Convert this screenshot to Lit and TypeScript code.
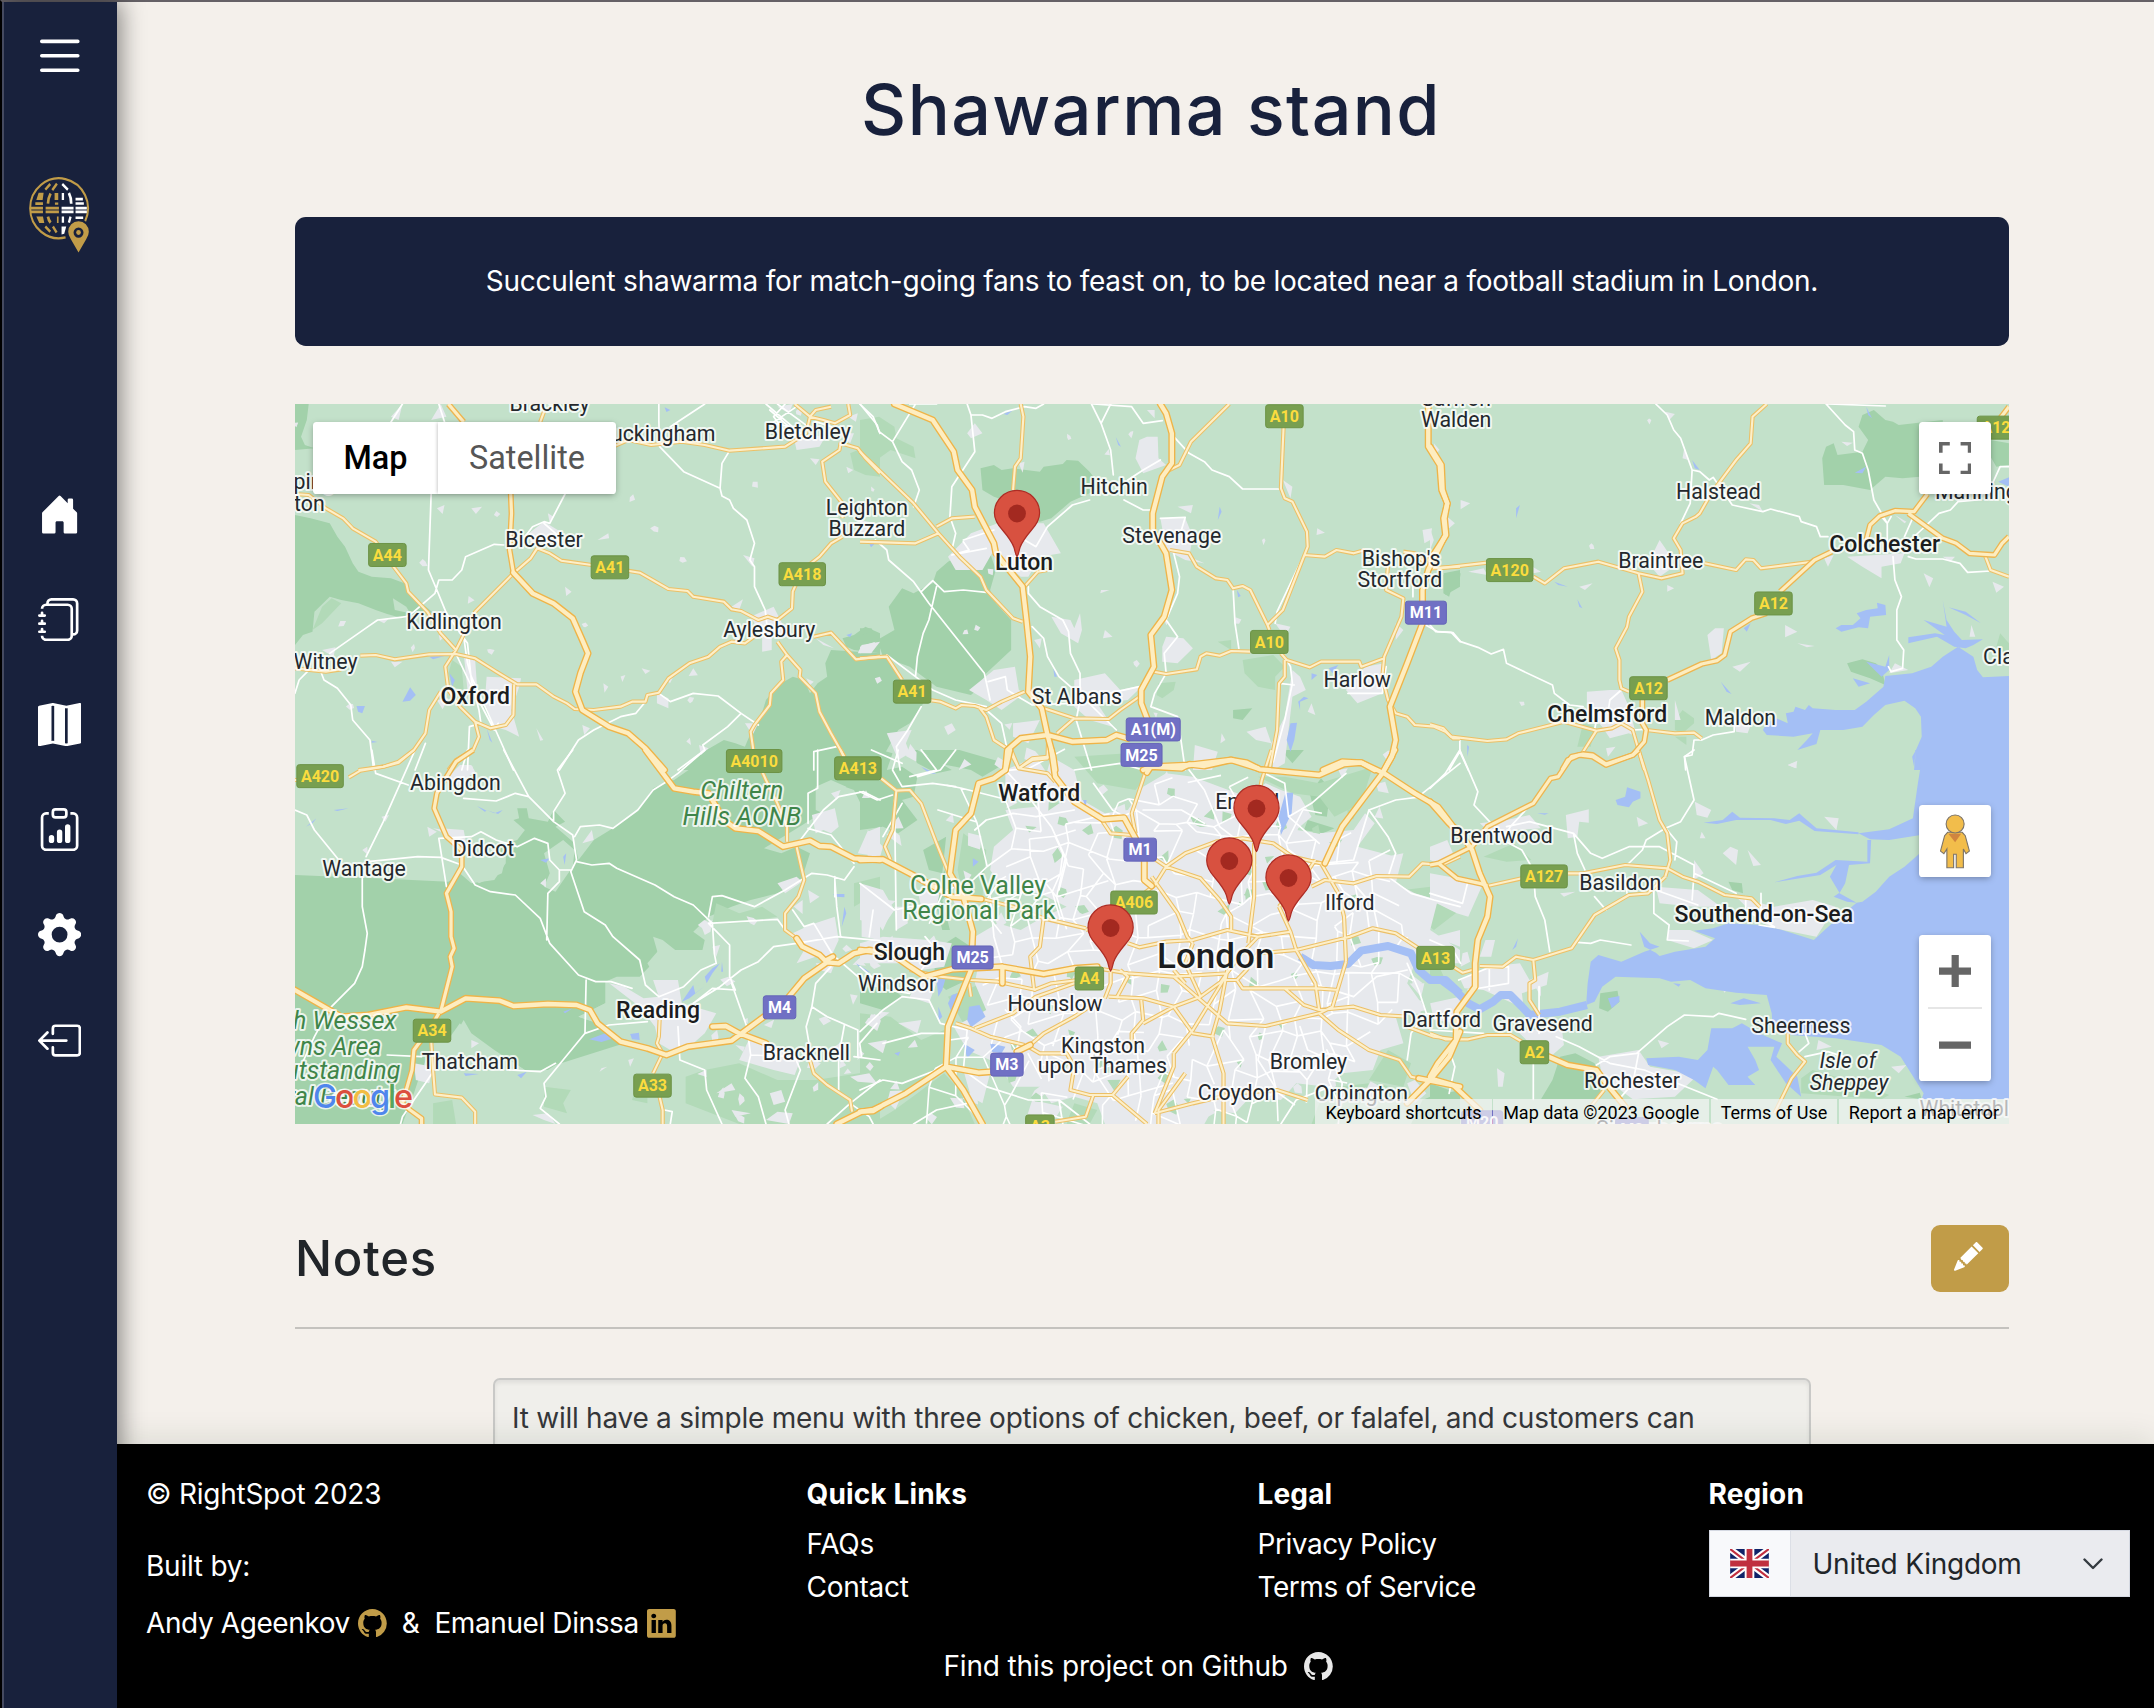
import { LitElement, html, css, svg } from "lit";
import { customElement } from "lit/decorators.js";

/* ---------- icon outlines (16 x 16 grid) ---------- */
const ICONS: Record<string, string[]> = {
  list: ["M2.5 12a.5.5 0 0 1 .5-.5h10a.5.5 0 0 1 0 1H3a.5.5 0 0 1-.5-.5zm0-4a.5.5 0 0 1 .5-.5h10a.5.5 0 0 1 0 1H3a.5.5 0 0 1-.5-.5zm0-4a.5.5 0 0 1 .5-.5h10a.5.5 0 0 1 0 1H3a.5.5 0 0 1-.5-.5z"],
  home: ["M6.5 14.5v-3.505c0-.245.25-.495.5-.495h2c.25 0 .5.25.5.5v3.5a.5.5 0 0 0 .5.5h4a.5.5 0 0 0 .5-.5v-7a.5.5 0 0 0-.146-.354L13 5.793V2.5a.5.5 0 0 0-.5-.5h-1a.5.5 0 0 0-.5.5v1.293L8.354 1.146a.5.5 0 0 0-.708 0l-6 6A.5.5 0 0 0 1.5 7.5v7a.5.5 0 0 0 .5.5h4a.5.5 0 0 0 .5-.5z"],
  journals: [
    "M5 0h8a2 2 0 0 1 2 2v10a2 2 0 0 1-2 2 2 2 0 0 1-2 2H3a2 2 0 0 1-2-2h1a1 1 0 0 0 1 1h8a1 1 0 0 0 1-1V4a1 1 0 0 0-1-1H3a1 1 0 0 0-1 1H1a2 2 0 0 1 2-2h8a2 2 0 0 1 2 2v9a1 1 0 0 0 1-1V2a1 1 0 0 0-1-1H5a1 1 0 0 0-1 1H3a2 2 0 0 1 2-2z",
    "M1 6v-.5a.5.5 0 0 1 1 0V6h.5a.5.5 0 0 1 0 1h-2a.5.5 0 0 1 0-1H1zm0 3v-.5a.5.5 0 0 1 1 0V9h.5a.5.5 0 0 1 0 1h-2a.5.5 0 0 1 0-1H1zm0 2.5v.5H.5a.5.5 0 0 0 0 1h2a.5.5 0 0 0 0-1H2v-.5a.5.5 0 0 0-1 0z",
  ],
  map: ["M16 .5a.5.5 0 0 0-.598-.49L10.5.99 5.598.01a.5.5 0 0 0-.196 0l-5 1A.5.5 0 0 0 0 1.5v14a.5.5 0 0 0 .598.49l4.902-.98 4.902.98a.502.502 0 0 0 .196 0l5-1A.5.5 0 0 0 16 14.5V.5zM5 14.09V1.11l.5-.1.5.1v12.98l-.402-.08a.498.498 0 0 0-.196 0L5 14.09zm5 .8V1.91l.402.08a.5.5 0 0 0 .196 0L11 1.91v12.98l-.5.1-.5-.1z"],
  report: [
    "M4 11a1 1 0 1 1 2 0v1a1 1 0 1 1-2 0v-1zm6-4a1 1 0 1 1 2 0v5a1 1 0 1 1-2 0V7zM7 9a1 1 0 0 1 2 0v3a1 1 0 1 1-2 0V9z",
    "M4 1.5H3a2 2 0 0 0-2 2V14a2 2 0 0 0 2 2h10a2 2 0 0 0 2-2V3.5a2 2 0 0 0-2-2h-1v1h1a1 1 0 0 1 1 1V14a1 1 0 0 1-1 1H3a1 1 0 0 1-1-1V3.5a1 1 0 0 1 1-1h1v-1z",
    "M9.5 1a.5.5 0 0 1 .5.5v1a.5.5 0 0 1-.5.5h-3a.5.5 0 0 1-.5-.5v-1a.5.5 0 0 1 .5-.5h3zm-3-1A1.5 1.5 0 0 0 5 1.5v1A1.5 1.5 0 0 0 6.5 4h3A1.5 1.5 0 0 0 11 2.5v-1A1.5 1.5 0 0 0 9.5 0h-3z",
  ],
  gear: ["M9.405 1.05c-.413-1.4-2.397-1.4-2.81 0l-.1.34a1.464 1.464 0 0 1-2.105.872l-.31-.17c-1.283-.698-2.686.705-1.987 1.987l.169.311c.446.82.023 1.841-.872 2.105l-.34.1c-1.4.413-1.4 2.397 0 2.81l.34.1a1.464 1.464 0 0 1 .872 2.105l-.17.31c-.698 1.283.705 2.686 1.987 1.987l.311-.169a1.464 1.464 0 0 1 2.105.872l.1.34c.413 1.4 2.397 1.4 2.81 0l.1-.34a1.464 1.464 0 0 1 2.105-.872l.31.17c1.283.698 2.686-.705 1.987-1.987l-.169-.311a1.464 1.464 0 0 1 .872-2.105l.34-.1c1.4-.413 1.4-2.397 0-2.81l-.34-.1a1.464 1.464 0 0 1-.872-2.105l.17-.31c.698-1.283-.705-2.686-1.987-1.987l-.311.169a1.464 1.464 0 0 1-2.105-.872l-.1-.34zM8 10.93a2.929 2.929 0 1 1 0-5.86 2.929 2.929 0 0 1 0 5.858z"],
  logout: [
    "M6 12.5a.5.5 0 0 0 .5.5h8a.5.5 0 0 0 .5-.5v-9a.5.5 0 0 0-.5-.5h-8a.5.5 0 0 0-.5.5v2a.5.5 0 0 1-1 0v-2A1.5 1.5 0 0 1 6.5 2h8A1.5 1.5 0 0 1 16 3.5v9a1.5 1.5 0 0 1-1.5 1.5h-8A1.5 1.5 0 0 1 5 12.5v-2a.5.5 0 0 1 1 0v2z",
    "M.146 8.354a.5.5 0 0 1 0-.708l3-3a.5.5 0 1 1 .708.708L1.707 7.5H10.5a.5.5 0 0 1 0 1H1.707l2.147 2.146a.5.5 0 0 1-.708.708l-3-3z",
  ],
  github: ["M8 0C3.58 0 0 3.58 0 8c0 3.54 2.29 6.53 5.47 7.59.4.07.55-.17.55-.38 0-.19-.01-.82-.01-1.49-2.01.37-2.53-.49-2.69-.94-.09-.23-.48-.94-.82-1.13-.28-.15-.68-.52-.01-.53.63-.01 1.08.58 1.23.82.72 1.21 1.87.87 2.33.66.07-.52.28-.87.51-1.07-1.78-.2-3.64-.89-3.64-3.95 0-.87.31-1.59.82-2.15-.08-.2-.36-1.02.08-2.12 0 0 .67-.21 2.2.82.64-.18 1.32-.27 2-.27.68 0 1.36.09 2 .27 1.53-1.04 2.2-.82 2.2-.82.44 1.1.16 1.92.08 2.12.51.56.82 1.27.82 2.15 0 3.07-1.87 3.75-3.65 3.95.29.25.54.73.54 1.48 0 1.07-.01 1.93-.01 2.2 0 .21.15.46.55.38A8.012 8.012 0 0 0 16 8c0-4.42-3.58-8-8-8z"],
  linkedin: ["M0 1.146C0 .513.526 0 1.175 0h13.65C15.474 0 16 .513 16 1.146v13.708c0 .633-.526 1.146-1.175 1.146H1.175C.526 16 0 15.487 0 14.854V1.146zm4.943 12.248V6.169H2.542v7.225h2.401zm-1.2-8.212c.837 0 1.358-.554 1.358-1.248-.015-.709-.52-1.248-1.342-1.248-.822 0-1.359.54-1.359 1.248 0 .694.521 1.248 1.327 1.248h.016zm4.908 8.212V9.359c0-.216.016-.432.08-.586.173-.431.568-.878 1.232-.878.869 0 1.216.662 1.216 1.634v3.865h2.401V9.25c0-2.22-1.184-3.252-2.764-3.252-1.274 0-1.845.7-2.165 1.193v.025h-.016a5.54 5.54 0 0 1 .016-.025V6.169h-2.4c.03.678 0 7.225 0 7.225h2.4z"],
  pencil: ["M12.854.146a.5.5 0 0 0-.707 0L10.5 1.793 14.207 5.5l1.647-1.646a.5.5 0 0 0 0-.708l-3-3zm.646 6.061L9.793 2.5 3.293 9H3.5a.5.5 0 0 1 .5.5v.5h.5a.5.5 0 0 1 .5.5v.5h.5a.5.5 0 0 1 .5.5v.5h.5a.5.5 0 0 1 .5.5v.207l6.5-6.5zm-7.468 7.468A.5.5 0 0 1 6 13.5V13h-.5a.5.5 0 0 1-.5-.5V12h-.5a.5.5 0 0 1-.5-.5V11h-.5a.5.5 0 0 1-.5-.5V10h-.5a.499.499 0 0 1-.175-.032l-.179.178a.5.5 0 0 0-.11.168l-2 5a.5.5 0 0 0 .65.65l5-2a.5.5 0 0 0 .168-.11l.178-.178z"],
};

const icon = (name: string, cls: string) => html`
  <svg class="icon ${cls}" viewBox="0 0 16 16" fill="currentColor">
    ${ICONS[name].map((d) => svg`<path d=${d} />`)}
  </svg>
`;

/* ---------- map geometry ---------- */
/* Each tile holds its own local grid; it is placed with an offset and scaled to map pixels. */
interface Tile {
  x: number;
  y: number;
  park?: string[];
  mid?: string[];
  light?: string[];
  urban?: string[];
  water?: string[];
  river?: string[];
  lane?: string[];
  road?: string[];
  trunk?: string[];
  motorway?: string[];
}

const TILES: Tile[] = [
  {
    x: 280, y: 390,
    park: [
      "39,42 75,42 70,90 55,140 65,165 90,175 39,180",
      "39,375 80,385 130,400 150,440 170,470 190,520 205,545 240,560 290,565 325,580 350,620 400,668 350,682 320,685 280,672 250,660 205,640 160,630 130,620 90,665 85,725 60,735 39,765",
      "1568,790 1440,780 1425,820 1430,860 1405,880 1385,910 1370,870 1340,860 1310,880 1285,910 1270,930 1262,960 1250,990 1230,1030 1215,1070 1190,1060 1160,1050 1100,1090 1040,1140 1568,1140",
      "1470,745 1500,735 1530,710 1568,730 1568,790 1500,780 1480,770",
    ],
    mid: ["1490,190 1530,170 1568,180 1568,260 1530,255 1500,240", "450,810 475,830 480,900 450,890 440,850", "85,720 110,650 135,625 160,640 110,700"],
    light: ["295,625 330,650 340,670 300,660"],
    urban: [
      "650,430 690,395 740,430 720,460 655,460", "540,860 630,865 625,890 605,960 625,1040 590,1020 560,1010 535,940", "480,790 510,810 515,890 490,900",
      "1230,680 1290,650 1330,740 1285,740 1285,780 1260,785 1260,740", "1340,130 1425,140 1410,170 1350,180", "290,80 320,42 310,90", "395,90 420,42 435,80",
      "110,780 145,772 140,800", "985,910 1015,925 1015,955 985,940", "410,355 430,345 425,372", "500,355 528,350 512,372", "830,450 858,430 860,445", "745,590 762,605 748,618",
      "945,835 968,842 955,852", "1080,835 1092,856 1068,858", "845,880 858,890 848,908", "790,1005 810,1015 795,1035", "1180,650 1210,628 1200,660", "1210,495 1240,505 1235,530",
      "700,370 715,380 705,400", "1385,205 1410,208 1400,225", "1520,765 1568,755 1545,790 1510,790", "1485,80 1510,70 1505,95", "1480,230 1498,240 1485,250", "1400,745 1448,775 1420,765",
      "670,1015 688,1050 680,1052", "1375,865 1395,875 1385,885", "1215,1000 1250,1000 1235,1035", "1095,1065 1120,1075 1100,1095", "410,930 440,925 425,958", "415,735 430,740 418,752", "290,815 320,815 300,832",
      "255,690 285,685 272,700", "480,1125 505,1130 500,1140 480,1140", "1460,130 1500,130 1490,160", "1300,50 1340,42 1330,70",
    ],
    water: ["320,935 340,892 355,915 340,932", "200,948 222,948 215,970 204,965", "443,850 457,870 450,890", "1005,52 1020,60 1010,66", "1540,450 1555,460 1545,472", "1480,735 1495,730 1490,742", "540,1015 555,1058 548,1050", "240,1052 255,1056 240,1058", "390,800 430,798 400,808"],
    lane: [
      "320,42 290,96", "415,42 430,96", "395,312 388,540 410,600 435,670 490,760 500,870 520,960 525,1000 495,1010 490,1140", "745,312 705,400 690,395 660,410 640,440",
      "585,465 560,463 485,500 475,540 450,570 415,570 405,610 350,665 330,680 255,690 230,710 130,790", "990,42 990,90 992,170 1055,245 1150,295 1155,318 1175,330 1185,355 1220,390 1240,460 1228,510 1240,530 1240,590 1268,660 1272,700",
      "1020,110 1110,42", "1175,182 1155,220 1150,295", "105,840 115,870 150,895 185,945 190,990 235,1050 245,1140", "39,910 50,870 80,835", "480,740 490,820 500,860 540,960 575,1050 610,1140",
      "730,1140 780,1050 820,1020 890,980 930,970 955,935", "990,910 1020,935 1080,910 1145,918 1205,970 1250,1005", "1205,970 1170,1010 1105,1065 1110,1080 1040,1140", "1395,1140 1395,1085 1455,1070",
      "1280,60 1330,110 1290,100", "1300,42 1380,110", "1285,100 1350,50", "1515,42 1550,80 1568,130", "353,1140 380,1060", "1270,42 1360,130", "1320,42 1290,80 1330,140", "1400,95 1440,110 1450,130", "690,400 720,430 730,460",
      "455,780 505,900 560,1020 570,1000",
    ],
    road: [
      "39,312 75,315 120,355 165,385 190,415 250,455 290,520 330,580 335,605 385,665 420,730 460,780", "672,475 655,505 610,550 510,665 460,780 432,830 440,900 470,950 510,995",
      "510,995 550,1015 590,1005 610,975 612,883", "672,475 705,490 735,512 815,525 940,548 1015,597 1065,603 1080,620 1160,635 1180,658 1205,663 1250,690 1275,680 1300,690",
      "1300,690 1338,655 1340,605 1365,540 1410,500 1440,460 1470,440", "1470,385 1470,340 1425,275 1417,215 1462,180 1465,160 1510,175 1530,205 1568,250",
      "860,175 910,150 970,165 1050,155 1110,165 1175,182 1320,170 1375,130 1385,80", "680,96 690,65", "210,797 250,795 300,808 390,793 460,792 510,805 565,845 620,883 670,883 715,920 750,940 770,957 820,960 890,950 920,935 955,935 960,915 990,908 1015,865 1070,820 1120,800 1150,770 1180,755 1215,760 1245,735",
      "39,835 120,845 160,838", "1300,755 1325,795 1310,815 1315,870 1283,910 1280,945 1240,1005 1230,1025 1237,1080", "1325,795 1360,840 1358,860 1400,910 1410,965 1440,1030 1460,1070 1475,1100",
      "1395,740 1440,728 1505,808 1568,800", "205,1140 270,1130 310,1115 350,1080 380,1030 390,960 420,905", "1345,42 1385,80 1400,60 1440,50", "1385,80 1420,90 1450,100 1490,75 1485,42", "510,995 520,1040 505,1080 460,1110 440,1140",
    ],
    trunk: ["440,42 480,96", "603,312 605,370 600,480 610,548"],
    motorway: ["610,548 660,610 715,640 765,685 790,750 805,790 785,850 772,905 790,960 860,1010 910,1030 955,1075 1005,1140"],
  },
  {
    x: 860, y: 390,
    park: [
      "315,235 350,225 370,240 400,235 470,245 480,230 530,222 540,210 570,212 600,245 630,290 600,310 550,335 500,385 470,395 440,385 400,340 350,320 320,300",
      "190,580 200,545 230,515 270,490 340,490 355,540 340,600 355,640 395,690 395,780 330,850 305,900 290,915 200,890 130,830 60,800 45,750 90,720 75,650 110,595 140,610",
      "0,810 75,800 110,870 185,900 160,950 130,1000 100,1020 60,1100 30,1140 0,1140", "0,715 30,715 35,725 0,735", "1525,550 1568,540 1568,590 1530,615", "975,960 1025,955 1000,990 975,985",
    ],
    mid: ["0,90 50,80 90,110 95,145 140,170 145,205 80,180 50,205 0,195", "1000,810 1080,795 1110,830 1085,860 1085,900 1040,890 1005,850", "935,755 970,750 970,780", "780,880 825,875 820,900 790,925 775,915"],
    urban: [
      "360,400 480,400 525,490 470,500 440,560 420,560 345,490 320,540 250,540 230,500 290,430", "720,205 730,150 750,140 778,140 780,205 800,225 740,250", "785,385 850,385 870,440 860,500 900,520 850,510 800,480",
      "285,900 350,840 405,830 415,900 430,910 370,960 330,930", "560,870 640,850 680,900 740,885 700,930 620,940 660,1010 600,990 560,950", "790,770 800,740 845,745 870,775 830,820 790,815", "560,715 575,670 580,720 570,760 525,730 500,680 550,690",
      "1130,840 1150,860 1165,900 1130,920 1110,1120 1080,1140 1075,1060 1110,980", "1270,900 1320,830 1370,820 1365,910 1300,940", "0,390 40,400 55,440 0,430", "280,130 300,100 320,130 290,145", "750,60 770,60 770,85", "415,220 430,215 425,248",
      "1105,270 1130,290 1125,325", "630,600 652,600 628,610", "640,720 660,740 635,745", "1195,415 1215,428 1193,435", "1470,420 1495,415 1490,450 1475,460", "1180,940 1190,975 1170,965", "945,1030 955,1050 942,1060", "1010,1025 1060,1010 1075,1060 1035,1050", "220,1010 240,1000 250,1020 230,1035",
      "70,1030 135,1020 120,1060 130,1090 100,1110", "0,770 40,755 20,785 0,790", "830,350 870,345 865,370", "1400,700 1420,720 1400,750", "455,750 475,745 470,775", "875,1065 935,1085 920,1140 870,1140", "400,1000 470,990 440,1060 400,1040", "1085,700 1125,710 1110,740", "1500,165 1512,185 1502,185",
    ],
    water: ["1125,1000 1142,998 1135,1050 1125,1085 1115,1050", "1160,920 1172,925 1150,935 1150,960 1145,935", "1225,835 1250,825 1235,850", "1180,850 1195,855 1180,870", "668,140 682,170 675,165", "940,350 945,365 935,390", "985,600 995,618 988,622", "505,835 515,860 508,860", "375,72 400,60 385,75", "20,450 38,460 28,470"],
    lane: [
      "0,42 45,105 50,125 85,155 130,70 145,42", "85,155 110,215 135,240 155,300 140,350", "280,42 290,75 320,75 345,85 380,65 430,50 460,55 480,42", "290,75 300,185 240,290 235,380 250,430 240,480", "605,42 630,100 655,180 662,255", "655,42 630,100",
      "610,42 710,50 740,100 790,92", "820,140 860,190 900,215 920,240 965,260 1000,297 1100,297", "460,470 490,410 555,345 600,330", "690,330 740,360 765,360", "785,210 740,240 700,270", "40,450 70,480 75,510 140,575 180,640 325,850 340,930",
      "160,605 190,572 220,605 270,600 330,607", "200,590 180,690 165,730 150,800 145,860 70,795", "145,860 190,900 250,930 330,950", "335,875 380,860 385,900 420,925 450,945 550,940", "440,590 440,610 470,650 530,690 545,725 550,790 575,850 575,930 565,990 605,1140",
      "450,710 480,745 490,800 520,860 590,930 670,1020", "820,490 835,560 830,610 800,690", "800,690 830,740 795,790 800,850 770,910 760,950 830,980 850,1140", "975,595 980,700 990,775", "1160,495 1090,665 1085,700", "1095,770 1125,830 1130,880 1110,990 1080,1115",
      "1445,570 1445,620", "1470,700 1510,725 1545,727 1568,755", "1275,910 1365,910 1375,830", "330,960 370,1000 385,1080", "160,950 125,1020 95,1070 105,1140", "785,385 850,382 840,420", "270,450 350,420", "270,455 285,480 240,495 330,475", "430,450 460,470", "1135,885 1095,880",
      "550,940 650,910 730,890", "130,42 200,42",
    ],
    road: [
      "420,42 427,80 420,205 405,230 400,300", "0,185 140,340 205,430 260,500 315,560 330,600 400,685 425,695", "0,455 145,460 205,430", "200,410 240,385 300,380", "965,42 865,155 835,225 800,245", "1107,110 1100,295 1110,325 1130,335 1168,425 1170,470 1105,660 1065,705",
      "1160,495 1215,500 1245,480 1290,490 1320,480", "1380,520 1375,600 1420,625 1415,680 1370,800 1365,860 1380,930 1400,970 1430,980 1450,1005 1500,1010 1530,1025 1550,1045 1568,1045", "810,480 860,490 880,530 930,565 960,570 975,595 1000,588 1020,600 1065,705 1070,720",
      "768,845 800,852 880,838 890,800 905,790 940,797 970,783 1020,785", "1100,790 1115,810 1175,832 1205,815 1305,815 1310,830 1370,805", "1110,810 1110,860 1095,880 1090,1020 1070,1140", "180,930 210,935 250,955 265,945 300,948 330,960 370,935 430,905", "0,805 70,800 110,870",
      "310,950 330,980 350,1050 390,1080 415,1135", "480,955 560,985 650,987 680,960 730,920", "515,1030 560,985", "430,590 465,545 490,540", "1420,485 1450,490 1490,535 1568,530", "415,1135 450,1110 490,1105 492,1040",
    ],
    motorway: [
      "90,42 190,90 245,185 255,240 293,300 300,350 350,460 355,490 425,590 435,690 445,800 440,905 475,955 490,1035 505,1100 510,1140", "785,42 800,70 815,130 815,220 790,260 765,370 765,420 800,490 815,600 795,680 760,735 768,830 735,900 735,940 750,985",
      "1485,42 1485,170 1515,225 1520,300 1535,340 1525,385 1530,435 1485,540 1470,600 1470,700 1430,820 1385,950 1400,1050 1390,1100 1370,1140", "380,1140 385,1080 420,1045 490,1035 555,1055 645,1050 670,1035 700,1045", "740,1140 760,1130 860,1125 970,1110 1040,1135", "1210,1140 1260,1115 1310,1118 1345,1140",
    ],
  },
  {
    x: 1430, y: 390,
    park: [
      "1130,75 1160,60 1190,90 1210,95 1225,105 1340,90 1345,250 1280,260 1235,265 1190,260 1150,300 1080,285 1030,285 1025,205 1035,170 1055,160 1065,195 1130,185 1145,150 1120,110",
      "1090,820 1130,808 1165,820 1180,835 1190,885 1150,865 1100,845", "35,555 80,550 75,590 55,600 50,620 35,610", "1465,150 1513,160 1513,225 1480,230 1465,200",
    ],
    mid: ["640,990 660,960 690,985 690,1000 660,1030 640,1020", "400,1000 430,1010 420,1070 385,1070", "640,1040 670,1040 670,1065", "1490,730 1513,760 1513,800 1480,770"],
    urban: [
      "600,450 630,500 625,540 600,560 570,520", "1090,500 1240,490 1230,520 1180,530 1180,565 1130,530", "410,905 470,900 500,900 520,950 540,1040 520,1030 470,1045 450,1010 410,960", "745,715 768,715 762,790 735,810 725,735",
      "80,330 105,340 80,358", "30,365 65,400 50,415", "665,170 675,210 660,205", "615,65 640,72 625,90", "835,340 860,345 870,365", "390,590 425,580 405,600", "620,585 638,595 620,605", "790,830 838,815 810,845", "928,705 960,725 928,742", "960,760 1005,768 985,772",
      "1290,550 1315,565 1305,592", "1470,575 1500,590 1480,608", "1215,820 1250,840 1200,850", "1075,155 1105,158 1090,168", "460,1075 485,1070 465,1100", "935,1125 960,1112 955,1135", "1030,505 1055,495 1040,530", "640,930 655,990 640,990", "1415,705 1425,740 1410,740",
      "100,545 140,535 150,555", "1215,375 1245,395 1240,400", "10,160 25,180 15,188", "795,1000 840,1000 830,1030 800,1025", "260,525 290,545 270,550", "1340,500 1372,500 1360,515", "0,415 10,450 0,480",
    ],
    water: [
      "1513,858 1445,862 1430,840 1420,800 1400,785 1380,770 1340,800 1310,830 1260,850 1190,858 1185,890 1140,935 1110,960 1060,960 1000,955 990,945 980,960 955,950 950,965 930,970 935,1000 905,985 880,1000 870,1020 880,1035 950,1040 1000,1030 985,1050 960,1080 1010,1062 1020,1020 1080,1020 1130,1010 1160,975 1190,945 1240,932 1268,955 1283,980 1285,1040 1270,1080 1265,1140 1513,1140",
      "1340,630 1350,690 1370,725 1390,750 1445,748 1420,765 1400,775 1370,770 1325,740 1250,760 1250,742 1320,730 1345,735 1290,690 1350,710", "1060,715 1075,705 1105,705 1125,685 1115,670 1140,660 1170,655 1168,638 1190,645 1192,675 1150,680 1145,715 1120,712 1075,725",
      "1485,275 1513,262 1513,290", "1110,248 1140,230 1130,250", "1355,652 1400,665 1440,700 1400,675", "685,210 705,240 692,235", "225,355 235,345 225,385", "385,628 398,655 390,650", "325,575 360,590 335,585", "820,715 838,700 828,725", "760,875 788,912 775,905", "1140,50 1155,85 1145,75",
      "1105,865 1150,880 1120,890", "1140,815 1190,830 1200,795 1200,840 1180,860", "97,1065 102,1070 98,1100", "1260,1100 1270,1080 1265,1130",
    ],
    lane: [
      "590,42 620,75 637,120 655,145 685,240 680,340 655,400", "685,240 705,245 730,270 740,262 790,345 870,365 890,357 965,380 970,395 1010,410 1020,440 1040,440", "1035,42 1085,105 1107,125 1110,180 1130,190 1145,240 1160,330 1195,400 1195,480", "1040,42 1190,48",
      "0,705 15,725 60,728 80,755 125,772 160,792 192,778 200,820 320,885 325,910 365,945 400,950", "500,900 470,930 465,970", "1210,500 1215,570 1232,620 1220,660 1220,750 1238,780 1235,835 1205,845 1198,830", "1250,500 1270,507 1340,507 1385,520 1405,547 1465,543",
      "1270,435 1330,370 1360,360 1380,335 1430,330 1470,280 1490,230 1513,230", "1265,375 1240,440", "78,1045 78,1085 50,1140", "78,1085 100,1140", "710,1050 740,1035 795,1025 795,1000", "710,1050 690,1050 685,1095 665,1100 668,1140", "1180,380 1195,400 1205,380", "530,1020 560,1018", "435,990 430,1020",
    ],
    road: [
      "20,535 150,518", "270,560 300,580 350,535 440,515 545,550 605,565 660,550 655,480 637,445 660,400 695,380 705,370 735,310 800,210 838,160 843,80 880,42", "545,550 555,605 520,680 515,710 485,775 495,810 495,870 500,895 520,905",
      "718,520 800,540 825,508 845,510 865,535 1000,515", "0,1003 35,1015 55,1040 150,1053 200,1048 230,1030 350,995 435,1022 475,1015 500,1000 530,1020 545,1080 560,1140", "565,1020 640,1030 690,1028 710,1045", "435,1022 395,1095", "1450,495 1465,540 1513,560",
    ],
    trunk: [
      "1513,50 1490,85", "1300,312 1265,365 1215,362 1175,378 1150,405 1140,450", "1050,485 1005,510 915,605", "880,670 840,685 785,725 770,795 750,812 710,822 620,870", "1250,370 1340,445 1375,460 1410,490 1475,495 1495,460 1513,440",
      "555,925 555,1000 565,1020 560,1055 530,1095 460,1125 425,1100 390,1095 360,1110 345,1140",
    ],
    motorway: ["0,170 30,225 33,300 45,340 38,385 42,435 0,510"],
  },
  {
    x: 280, y: 750,
    park: [
      "39,375 150,380 250,385 440,395 470,370 500,400 560,390 590,340 590,320 560,290 620,270 640,240 610,210 625,205 620,175 645,175 650,205 700,215 715,180 745,215 720,230 770,280 780,330 820,270 870,235 935,180 975,115 1010,95 1030,90 1080,50 1110,0 1568,0 1568,215 1530,190 1500,120 1450,100 1420,180 1400,200 1330,250 1265,295 1310,310 1350,290 1385,310 1360,400 1300,430 1230,450 1180,470 1120,500 1080,545 1110,570 1100,620 1060,625 1000,570 975,560 990,620 940,680 880,680 850,695 850,760 780,800 830,820 900,830 900,880 720,945 700,960 640,960 560,900 500,850 480,810 450,870 400,880 370,960 350,1030 320,1122 39,1122",
    ],
    mid: [
      "1500,400 1568,380 1568,500 1530,450 1500,470", "1060,980 1110,960 1200,940 1300,990 1400,990 1568,960 1568,1122 1200,1122 1060,1060", "690,1010 760,1020 740,1060 750,1090 690,1070", "930,1010 960,1000 960,1060 920,1050", "400,1060 450,1050 460,1122 400,1122",
      "1140,460 1200,490 1260,470 1300,500 1200,520 1130,520",
    ],
    light: [
      "690,310 740,270 770,300 765,350 735,400 720,425 690,410 705,370", "400,230 560,290 590,320 580,370 520,400 480,360 420,300", "780,800 850,760 960,770 960,850 900,870 830,820", "420,900 470,820 500,860 640,960 500,1000 430,960", "1400,110 1440,90 1480,110 1440,200 1400,180",
      "1130,600 1160,560 1140,700 1000,720 960,640 990,600",
    ],
    urban: [
      "860,700 900,710 950,745 990,740 975,690 1040,690 1050,760 1140,790 1110,850 1070,890 1020,900 990,880 980,830 940,770", "1390,195 1450,175 1460,230 1440,250 1420,240 1400,250", "1535,245 1568,230 1568,320 1510,310", "1385,525 1450,500 1460,570 1440,620 1400,620 1350,640 1370,600 1330,555",
      "1225,870 1260,870 1360,930 1345,975 1290,960 1260,950 1200,930", "440,80 470,45 500,45 510,65 480,90 470,110", "420,235 480,240 490,300 440,265", "790,280 815,240 820,270", "1520,510 1550,505 1568,520 1568,570 1520,560", "385,230 410,245 390,260", "215,300 228,290 230,315", "500,870 520,880 500,895",
      "1380,420 1410,440 1385,460", "1300,400 1350,380 1365,395 1320,430", "1280,1030 1310,1020 1320,1055 1290,1065", "1140,1030 1180,1000 1190,1020", "350,940 400,950 390,1000 355,990", "840,955 855,950 835,965", "910,930 925,925 915,950", "680,400 695,385 695,412", "1100,525 1130,510 1125,545 1110,555",
      "1490,980 1540,970 1560,1000 1510,995", "660,1095 700,1090 720,1122 690,1110", "1270,1110 1300,1085 1340,1090 1330,1122", "1400,640 1450,640 1440,670 1410,660", "1190,885 1215,890 1210,905", "1180,1080 1230,1090 1190,1100", "420,245 400,235 430,240", "1440,130 1465,120 1455,150", "265,200 285,195 275,215", "1130,590 1150,585 1140,620",
    ],
    water: [
      "1050,755 1080,705 1085,730 1110,708 1070,745", "808,868 850,850 885,860 840,876", "915,852 938,848 940,870 920,868", "680,330 705,325 695,338", "740,320 748,310 744,345", "540,180 560,190 582,180 570,192", "515,168 540,182 535,185", "68,230 95,205 85,220", "140,180 180,175 150,183", "1445,432 1475,432 1475,442 1455,440",
      "1475,470 1480,490 1468,530", "1505,640 1545,668 1520,660", "1155,635 1158,665 1153,665", "1110,680 1130,655 1150,640 1130,670 1115,700", "480,970 520,972 485,978", "620,975 645,965 630,985", "740,785 765,775 745,790",
    ],
    lane: [
      "240,0 250,70 335,105", "353,0 270,215 225,320", "39,180 70,195 90,240 150,325", "230,335 360,320 420,322 475,345 510,405 550,425 615,435 680,505 705,580 780,675 825,695 865,695 920,715", "490,0 475,60", "480,145 565,153 615,130 650,140", "585,0 650,140 715,215 765,255 775,330 760,365 795,485 850,525 870,560 940,630 955,705 990,740",
      "765,0 725,60 745,130 715,185 715,215", "770,260 785,230 835,225 870,235 935,180 975,120 1010,95 1040,70 1110,0", "775,335 815,345 860,340 880,355 980,405 1030,440 1080,465 1130,520 1135,610 1140,640 1100,660 1055,710 990,740", "1120,520 1175,585 1175,680 1190,720", "1120,520 1300,508 1320,540",
      "1130,440 1155,437 1240,470 1320,420 1390,370 1430,375 1475,390 1500,350", "1120,500 1130,440", "415,265 435,410", "415,265 500,260 525,245 565,270 620,290 665,265 700,280 705,330 730,360 760,360", "730,360 730,395 700,430 697,570", "215,370 215,470 228,550 222,600 215,650 195,700 130,775 90,860 50,960", "280,915 370,920",
      "800,690 797,850 690,1000 695,1040 680,1075 730,1122", "797,850 860,825 960,815", "600,960 680,965 720,940", "400,965 380,1000 320,1100 315,1122", "1080,760 1150,710 1205,660 1250,635 1290,590 1350,580 1455,560 1568,572", "1180,700 1220,830 1230,915 1345,920 1360,960 1320,1080 1330,1122", "1040,830 1045,930 1110,960 1115,1020 1155,1122",
      "1230,915 1215,985 1250,1040 1270,1122", "1005,1080 1025,1085 1020,1122", "1340,480 1370,530 1395,520 1445,615 1510,680", "1450,390 1455,470 1465,560", "1440,650 1400,700 1390,770 1430,800 1510,840 1510,920", "1475,825 1460,920 1460,1020", "1390,770 1375,830 1390,930", "1405,0 1405,115 1380,130 1380,220", "1360,270 1420,180 1460,140 1525,125 1568,150",
      "1380,235 1440,255 1500,340", "1430,1122 1490,1060 1568,990", "1500,920 1568,930", "1190,720 1130,715 1080,760", "1560,820 1515,880 1520,920", "1450,380 1450,440", "1550,480 1540,560", "1490,1060 1540,1100 1550,1122",
    ],
    road: [
      "180,82 210,62 270,50 310,38 350,0", "395,870 400,960 405,1033 475,1043 510,1085 510,1122", "992,810 990,860 985,880 1000,910 975,970", "992,1040 1000,1080 1000,1122", "1235,0 1270,90 1300,160 1325,230 1325,275", "1350,290 1370,390 1355,440 1320,490 1320,540 1350,565",
      "1385,930 1395,970 1430,1005 1490,1050 1495,1085", "39,90 50,90", "1465,0 1475,25",
    ],
    trunk: ["505,0 460,35 430,90 410,130 403,175 435,260 475,300 475,350 435,430 447,485 447,560 455,595 445,620 450,650 420,785", "415,790 395,830 350,900 345,960 330,1020 320,1060 340,1080 370,1105 370,1122"],
    motorway: [
      "955,0 1030,115 1080,125 1120,130 1160,210 1190,235 1250,243 1315,290 1385,272 1410,288 1440,290 1500,325 1568,330", "39,720 130,780 160,800 230,795 330,772 420,785 485,745 575,752 610,768 700,762 775,765 810,780 830,820 890,875 960,895 1010,915 1065,890 1180,872 1265,800",
      "1330,740 1370,685 1430,637 1460,640 1500,610 1540,600 1568,605", "1350,565 1365,590 1410,615 1425,632 1445,620", "1130,830 1165,828 1200,850 1270,880", "1455,1122 1520,1085 1550,1080 1568,1070",
    ],
  },
  {
    x: 860, y: 750,
    park: [
      "0,20 55,0 85,10 70,60 110,50 150,80 140,140 110,150 150,210 100,250 60,230 0,240", "160,0 260,0 380,40 320,80 290,60 250,50 200,40", "195,600 250,560 290,590 280,690 225,720 195,690", "220,360 240,420 215,450 235,540 215,540 200,470", "640,795 700,762 735,800 728,850 670,860 640,835",
      "815,370 870,375 888,430 850,455 820,430", "0,700 60,690 110,740 60,780 0,760", "1100,0 1130,40 1160,0", "1175,130 1205,85 1230,120 1220,200 1190,195", "1490,1040 1568,1020 1568,1122 1440,1122 1470,1050", "120,0 150,0 240,60 200,70 150,40", "800,455 840,430 850,455", "880,945 925,970 905,975", "1170,210 1240,235 1210,250 1160,240",
      "165,300 225,260 215,370 180,360", "1140,930 1165,940 1150,950",
    ],
    mid: [
      "0,790 80,800 160,870 220,840 230,950 120,1020 30,1080 0,1080", "30,1122 90,1080 150,1030 220,970 260,1020 300,1122", "230,740 320,700 390,760 350,840 280,840", "270,250 330,300 320,440 270,440 255,360", "560,20 700,10 760,60 720,120 620,100", "1040,80 1110,80 1200,100 1340,50 1310,160 1240,200 1200,140 1130,130",
      "1420,420 1568,400 1568,480 1500,540 1430,480", "1380,900 1440,940 1420,1010 1330,990", "700,880 760,900 750,960 700,950", "560,1060 620,1080 600,1122 540,1122", "1250,1010 1330,1000 1300,1080 1240,1122 1180,1122 1200,1060",
    ],
    light: ["300,180 370,150 430,200 400,260 350,300 290,290", "0,250 60,230 100,330 30,330"],
    urban: [
      "500,20 560,60 580,150 640,190 700,180 740,110 800,70 870,80 940,110 1010,140 1060,100 1100,120 1150,140 1180,200 1140,240 1200,250 1290,240 1320,190 1345,220 1300,290 1330,330 1420,310 1400,400 1450,430 1510,450 1490,540 1568,600 1568,640 1450,640 1430,700 1480,780 1400,800 1420,880 1360,900 1340,960 1260,970 1220,1010 1140,1000 1100,1050 1020,1040 980,1090 920,1080 900,1122 640,1122 620,1060 560,1040 500,1060 470,1010 400,1010 370,960 340,930 280,900 245,830 330,780 300,700 310,640 300,560 360,520 420,540 480,500 540,470 470,430 380,420 340,360 350,290 400,240 380,180 460,170 480,100",
      "0,580 60,560 180,570 240,580 220,650 160,660 100,640 0,640", "430,1122 450,1050 530,1070 500,1122", "20,240 60,290 50,330 20,320", "0,400 60,420 90,480 60,530 0,510", "380,60 460,20 500,90 450,150 380,140", "150,690 200,700 180,760 130,740", "1240,330 1300,290 1400,320 1380,380 1300,390",
      "100,820 160,810 150,850", "20,880 70,870 60,910", "1430,1000 1450,990 1480,1030 1450,1060", "1490,760 1568,740 1568,820 1500,810", "90,470 120,470 125,520 95,540", "150,420 210,420 200,470 160,470", "1500,560 1568,540 1568,590", "270,960 340,970 320,1060 290,1040", "1250,60 1275,55 1260,85",
    ],
    water: [
      "1112,128 1132,128 1128,190 1100,255 1094,200", "240,735 258,728 262,780 240,790 230,760", "285,770 312,765 328,800 290,832 280,810", "340,880 380,890 370,910 345,905", "200,690 225,680 215,720 205,740", "205,770 215,800 205,812", "295,325 310,335 295,350", "583,150 592,150 590,175", "370,950 410,945 390,980 360,975", "270,880 300,900 280,925",
      "160,50 200,72 180,70", "90,910 105,905 100,918",
    ],
    river: ["1150,620 1185,645 1230,648 1275,642 1310,602 1380,588 1440,610 1460,660 1490,690 1530,690 1568,730"],
    lane: [
      "0,125 45,150 85,135", "100,0 85,60 110,110 190,100 250,110", "130,80 200,60 160,0", "300,240 330,210 400,190 460,200 560,180", "380,60 420,110 460,170 500,230 540,330 520,420", "0,400 90,480 130,470 210,460", "90,150 95,540", "340,440 350,560 370,640", "250,0 210,60 150,80", "110,160 60,260",
      "0,845 60,780 110,740 180,750 210,820 280,840", "0,1020 60,990 110,1000 200,960", "60,880 160,850 220,850", "280,840 270,960 330,1010 440,1050 520,1050 600,1122", "1210,340 1290,330 1330,180 1400,150 1470,140", "1330,180 1380,260 1400,310 1380,380 1440,430", "1470,130 1568,40",
      "1440,430 1500,450 1568,470", "1330,530 1320,440 1290,400", "1040,60 1110,100 1120,200 1200,280", "1120,200 1180,160 1270,70", "860,60 900,120 940,230 980,265", "610,100 660,180 690,200", "1430,640 1460,720 1480,790 1568,800", "1480,790 1440,850 1430,930", "740,180 840,180 900,220", "560,60 680,40 740,60",
      "0,650 70,720 130,730", "1100,1122 1140,1050 1230,1010", "1250,1122 1260,1000 1220,900", "1060,828 1040,930 1090,1020", "1150,830 1170,900 1230,930", "520,1050 530,1122", "170,560 200,600 160,660", "1180,700 1290,740 1350,680 1430,660", "140,1122 200,1080 280,1060", "30,0 110,40", "380,780 420,830 410,900",
    ],
    road: [
      "415,55 450,25 495,20", "395,0 415,55 490,70 510,95", "720,250 710,190 745,70", "55,85 95,122 85,240 65,290 80,330", "95,122 130,120 160,160 200,280 232,370", "320,447 400,470 480,505 590,535", "480,505 470,590 445,620 455,720 500,700 570,690", "620,190 655,250 710,255",
      "590,540 660,510 710,460 770,405 800,350 850,310 930,275 1000,265 1080,280 1130,320 1205,340 1250,430 1265,500 1270,635", "762,380 830,490 855,560 870,580", "735,300 800,350 890,385 940,450 970,500 970,540", "700,580 730,592 800,575 870,570 960,540 1040,560 1125,545", "1075,0 1050,90 1030,200 1030,440 1015,580",
      "1095,470 1125,545 1140,600 1190,700 1200,780", "1180,410 1215,390 1290,400 1350,378 1435,380 1470,340 1520,345 1568,320", "1520,345 1568,390", "1040,610 1140,600 1280,560 1340,535 1400,550 1460,595", "1270,635 1235,770 1200,790", "650,740 740,745 820,770 890,740 950,690 985,690", "985,690 1000,715 1110,715 1195,715 1250,720",
      "960,660 940,780 920,860 950,970 950,1122", "1110,715 1160,765 1200,780 1290,770 1360,795 1430,800", "820,770 870,850 925,860", "820,680 880,740 960,820 1060,828 1200,790", "1200,790 1250,840 1330,900 1410,930 1440,980 1480,990", "960,670 820,680 700,670 620,655", "680,660 700,680 670,745", "655,665 655,700 640,745",
      "430,885 340,860 290,835 250,820", "300,835 400,790 460,740 560,700", "440,890 480,850 560,800 600,770", "440,890 470,910 540,910 560,950 550,1020 600,1035 660,1035 700,980", "735,750 740,810 710,850 710,900", "820,770 740,820", "820,910 820,950 770,1090", "610,1035 590,1100 510,1115", "660,1035 750,1122",
      "770,1090 870,1060 980,1030 1090,1020 1170,1050", "820,910 870,840 950,690", "290,690 360,695 460,720", "890,740 850,640 870,580", "940,700 990,620 1040,560", "850,700 820,660", "1045,600 1010,660 985,690", "1430,830 1500,860 1568,870", "130,660 210,680 290,690", "1190,330 1160,380 1095,470", "780,1122 780,1080 850,970",
      "285,700 290,740",
    ],
    motorway: [
      "392,0 380,60 350,85 310,100 290,190 250,240 235,370 270,440 295,545 290,660 230,830 225,950", "500,0 510,80 560,155 635,208 690,203 720,265", "743,330 743,390 762,408", "750,68 760,50 840,55 860,43 900,48 970,30 1010,38 1045,58 1200,75 1265,42 1310,38 1370,70 1450,130 1510,170 1550,230 1568,245",
      "1398,0 1365,70 1260,230 1235,290 1215,340", "0,330 60,328 130,370 240,440 317,447", "0,600 80,610 130,650 170,680 240,658 370,650 480,672 560,655 620,650", "372,650 372,700", "225,950 310,968 345,965", "410,905 445,885", "0,1085 35,1083 60,1065 120,1030 225,950 270,1020 320,1122", "1568,845 1540,920 1490,990 1430,1060",
      "1460,985 1568,1010",
    ],
  },
  {
    x: 1430, y: 750,
    park: ["445,730 490,722 495,755 465,785 442,775", "290,1048 320,990 340,920 380,910 430,940 450,1000 440,1048", "0,1000 50,1020 60,1048 0,1048", "1240,1040 1280,1028 1285,1048", "780,395 815,400 818,430 790,420"],
    mid: ["970,985 1000,960 1120,1000 1200,1035 1180,1048 970,1030", "140,320 220,280 265,330 200,335", "0,620 20,640 40,690 0,680"],
    urban: [
      "850,510 900,470 1000,450 1060,470 1010,560 900,535", "625,540 680,540 740,570 690,595 620,570", "80,690 150,650 235,640 260,690 310,665 305,705 240,730 245,775 140,720 90,715", "0,370 50,380 135,410 100,500 70,490 0,450", "225,840 345,840 350,885 320,915 270,890", "440,920 545,900 575,950 700,975 640,1040 530,1048 450,980",
      "355,195 415,178 415,218 390,215 385,260 360,265", "692,155 735,180 725,203 697,195", "765,310 785,290 805,300 800,345", "830,300 865,345 845,348", "130,220 200,210 260,195 290,235 220,240 180,270", "540,200 570,220 545,230", "710,245 720,265 705,265", "1030,200 1068,205 1062,240", "935,45 958,35 958,55", "145,570 170,570 160,620 130,620",
      "85,610 98,605 105,635 80,650", "595,870 625,880 605,895", "175,955 195,970 190,1010 178,1010", "1205,950 1245,945 1225,970", "760,710 785,705 770,728", "1015,870 1050,890 1010,900", "0,290 45,270 60,310 20,340 0,330", "590,410 700,420 760,470 690,470 600,460", "340,430 380,425 350,440", "800,440 900,470 860,510", "690,330 715,370 690,390", "265,690 290,690 290,740",
    ],
    light: ["1050,500 1110,455 1130,460 1070,500"],
    water: [
      "1268,0 1282,50 1275,100 1262,205 1200,238 1120,250 1150,268 1200,270 1278,256 1278,312 1240,350 1200,380 1165,425 1130,455 1115,458 1060,510 1003,570 920,540 860,525 780,520 740,535 690,542 745,565 720,590 640,605 600,618 590,608 560,590 548,545 575,580 600,590 560,605 500,635 440,615 420,635 412,700 408,765 430,755 450,710 485,680 600,685 630,695 680,690 720,715 800,728 880,735 893,790 895,830 940,855 1060,865 1180,885 1230,920 1290,1030 1285,1048 1513,1048 1513,0",
      "565,925 650,920 700,930 725,900 735,835 790,835 815,820 860,850 900,870 920,880 905,920 960,980 970,1040 930,1000 890,930 900,890 860,890 830,890 850,930 860,960 830,980 850,1005 780,1005 750,960 740,950 720,1015 690,990 640,960 570,945",
      "715,218 765,210 790,185 810,203 900,205 940,210 965,190 975,200 1010,235 1120,247 1120,253 1005,243 965,212 930,222 890,210 800,210 750,222", "900,397 960,378 1010,368 1060,330 1143,335 1143,270 1153,270 1150,340 1095,345 1085,400 1070,430 1115,458 1090,455 1055,440 1070,428 1045,380 1062,345 1020,375", "485,150 510,140 515,112 550,125 550,145 530,155 520,172 490,165",
      "465,745 495,738 495,755 475,775", "230,565 215,600 225,590", "280,190 310,190 300,194", "635,700 655,702 650,710", "785,760 820,745 865,760 810,765",
    ],
    river: ["0,690 30,690 65,720 100,760 130,778 165,755 185,735 210,735 240,770 260,795 340,785 410,765"],
    lane: [
      "78,0 125,125 115,165 160,220", "78,0 40,70 0,115", "690,0 665,20 690,150 655,215 615,235 565,270 555,300 515,345", "250,180 210,230 190,270 240,300 270,360 275,440 300,510 313,605", "200,230 260,215 375,250 385,310 405,360", "375,250 420,310 450,325 520,290 600,290 690,345 690,370 800,430", "620,240 645,275 640,330",
      "690,370 685,450", "585,400 585,490 625,525 620,570 675,573", "590,420 700,465", "385,577 420,580 445,570 525,585", "0,430 85,460 100,390", "430,440 460,480", "435,945 470,920 540,910 620,830 665,795 740,800 755,790 825,808", "330,860 390,890 470,940 560,960 750,1048", "285,710 285,850", "75,690 150,655 205,650 205,700 100,720",
      "50,900 65,950 50,1030", "270,940 270,1048", "980,850 990,880 965,905", "825,440 825,480 900,530", "865,430 865,480", "155,655 155,720", "0,570 60,600 80,640", "140,850 0,840", "545,910 530,1000 500,1040", "510,380 515,430", "980,920 1040,905 1080,920", "860,525 900,532",
    ],
    road: [
      "545,0 570,90 600,210 620,250 628,330 615,380", "150,408 240,385", "360,370 400,370 510,345 620,355 660,380 700,395 770,435 840,445 862,470", "615,380 570,430 520,435 430,495 370,595 270,630 225,620 190,650 130,648", "60,650 85,668 110,660", "270,630 275,690 260,700 260,750 285,795", "0,850 40,868 100,868 150,855 210,855 240,875",
      "935,850 935,880 960,915 980,935 945,985 900,1090", "455,1020 420,1070",
    ],
    trunk: ["22,340 110,290 150,230 270,160 315,85 335,80 370,20 400,12 425,15 460,42 530,15 545,0", "0,345 22,340 70,385 130,400 150,408"],
    motorway: ["0,155 50,220 85,260 110,300 130,370 157,440 150,500 125,570 118,640 118,710 70,785 68,870 20,940 0,980", "0,985 60,1005 130,1080", "310,920 360,945 435,960 460,1000 510,1070"],
  },
];

const SX = 600 / 1568;
const SY = 1 / 3;
const tileAt = (t: Tile) => `translate(${t.x} ${t.y}) scale(${SX} ${SY})`;

const layer = (key: keyof Tile, cls: string) =>
  TILES.filter((t) => t[key]).map(
    (t) => svg`<path class=${cls} transform=${tileAt(t)} vector-effect="non-scaling-stroke" d=${(t[key] as string[]).map((p) => "M" + p).join("")} />`
  );

/* Fine street texture, generated from a fixed seed. */
function rng(seed: number) {
  let s = seed;
  return () => {
    s = (s * 1664525 + 1013904223) % 4294967296;
    return s / 4294967296;
  };
}

function streets(cx: number, cy: number, rx: number, ry: number, step: number, density: number, seed: number): string {
  const r = rng(seed);
  const cols = Math.ceil((2 * rx) / step);
  const rows = Math.ceil((2 * ry) / step);
  const pts: number[][][] = [];
  for (let j = 0; j <= rows; j++) {
    pts.push([]);
    for (let i = 0; i <= cols; i++) {
      pts[j].push([cx - rx + (i + (r() - 0.5) * 0.9) * step, cy - ry + (j + (r() - 0.5) * 0.9) * step]);
    }
  }
  const inside = (p: number[]) => ((p[0] - cx) / rx) ** 2 + ((p[1] - cy) / ry) ** 2 < 1;
  const line = (a: number[], b: number[]) => `M${a[0].toFixed(1)},${a[1].toFixed(1)} ${b[0].toFixed(1)},${b[1].toFixed(1)}`;
  let d = "";
  for (let j = 0; j < rows; j++) {
    for (let i = 0; i < cols; i++) {
      const p = pts[j][i];
      if (!inside(p)) continue;
      if (r() < density) d += line(p, pts[j][i + 1]);
      if (r() < density) d += line(p, pts[j + 1][i]);
    }
  }
  return d;
}

function patches(x0: number, y0: number, w: number, h: number, n: number, size: number, seed: number): string {
  const r = rng(seed);
  let d = "";
  for (let k = 0; k < n; k++) {
    const x = x0 + r() * w;
    const y = y0 + r() * h;
    const c = 3 + Math.floor(r() * 3);
    let a = r() * 6;
    const ps: string[] = [];
    for (let m = 0; m < c; m++) {
      const q = size * (0.4 + r());
      ps.push(`${(x + Math.cos(a) * q).toFixed(1)},${(y + Math.sin(a) * q).toFixed(1)}`);
      a += 6.28 / c;
    }
    d += "M" + ps.join(" ") + "Z";
  }
  return d;
}

const STREETS = streets(1190, 950, 215, 172, 20, 0.68, 7) + streets(1010, 840, 100, 80, 32, 0.45, 21) + streets(1030, 1070, 120, 60, 28, 0.55, 5);
const GREY_BITS = patches(295, 404, 1400, 340, 40, 3.6, 11) + patches(860, 750, 560, 370, 90, 8, 3) + patches(700, 900, 220, 220, 34, 6, 9);
const GREEN_BITS = patches(1010, 790, 380, 330, 62, 6, 17);

/* Labels: text, centre x, baseline y, style */
const K = 1.3737;
type Label = [string, number, number, string?];
const LABELS: Label[] = [
  ["Brackley", 400, 294], ["Buckingham", 478, 316], ["Bletchley", 588, 314], ["Hitchin", 811, 354.5], ["Leighton", 631, 370], ["Buzzard", 631, 385], ["Stevenage", 853, 390],
  ["Saffron", 1060, 290], ["Walden", 1060, 305.5], ["Halstead", 1251, 358], ["Braintree", 1209, 408.5], ["Bishop's", 1020, 406.5], ["Stortford", 1019, 422], ["Colchester", 1372, 396, "city"], ["Manningtree", 1452, 358],
  ["Chipping", 213, 351], ["Norton", 212.5, 367], ["Bicester", 396, 393], ["Kidlington", 330.5, 452.5], ["Witney", 237, 481.5], ["Oxford", 346, 507, "city"], ["Aylesbury", 560, 458.5], ["Luton", 745.5, 409, "city"],
  ["St Albans", 784, 507], ["Harlow", 988, 495], ["Chelmsford", 1170, 520, "city"], ["Maldon", 1267, 522.5], ["Clacton", 1470, 478], ["Abingdon", 331.5, 570], ["Didcot", 352, 618], ["Wantage", 265, 632.5],
  ["Watford", 756.5, 577, "city"], ["Enfield", 908, 584], ["Brentwood", 1093, 608.5], ["Basildon", 1179.5, 642.5], ["Ilford", 982.5, 657.5], ["Southend-on-Sea", 1284, 665.5, "city"], ["Slough", 662, 693, "city"], ["Windsor", 653, 716],
  ["Hounslow", 768, 731], ["London", 885, 696, "capital"], ["Kingston", 803, 761], ["upon Thames", 802.5, 776], ["Bracknell", 587, 766.5], ["Reading", 479, 735.5, "city"], ["Thatcham", 342, 773], ["Dartford", 1049.5, 742.5],
  ["Gravesend", 1123, 745.5], ["Bromley", 952.5, 773], ["Croydon", 900.5, 795.5], ["Orpington", 991, 796.5], ["Rochester", 1188, 787], ["Sheerness", 1311, 747], ["Isle of", 1345, 772, "isle"], ["Sheppey", 1346, 788, "isle"],
  ["Whitstable", 1434, 807.5], ["Sittingbourne", 1208, 821.5], ["Chiltern", 540, 576, "nature slant"], ["Hills AONB", 540, 594.5, "nature slant"], ["Colne Valley", 712, 645, "nature"], ["Regional Park", 712.5, 663, "nature"],
  ["North Wessex", 233.5, 743.5, "nature slant"], ["Downs Area", 230.5, 762, "nature slant"], ["Outstanding", 243.5, 780, "nature slant"], ["Natural Beauty", 229, 798.5, "nature slant"],
];

/* Road shields: text, centre x, centre y */
const SHIELDS: [string, number, number][] = [
  ["A44", 282, 404], ["A41", 444, 413], ["A418", 584, 418], ["A10", 935, 303], ["A120", 1099, 415], ["M11", 1038, 446], ["A12", 1291, 439.3], ["A12", 1200, 501], ["A10", 924, 467.3], ["A41", 664, 503.5], ["A1(M)", 839.5, 531],
  ["M25", 831, 549.5], ["A4010", 549, 554], ["A413", 624.5, 559.3], ["A420", 233, 565], ["M1", 830, 618.5], ["A127", 1124, 638], ["A406", 825.5, 657], ["M25", 708, 697], ["M4", 567.5, 733.3], ["A4", 793, 712.3], ["A13", 1045, 697.3],
  ["A34", 314.5, 750.3], ["A33", 475, 790.3], ["M3", 733, 775], ["A2", 1117, 766], ["A3", 757, 820], ["A12", 1453, 311.3], ["M20", 1079, 817], ["M2", 1188, 822],
];

const PINS: [number, number][] = [[1017, 556.5], [1256.5, 851.5], [1229.3, 904], [1288.5, 921], [1110.6, 971]];

const shield = ([t, x, y]: [string, number, number]) => {
  const cx = x * K;
  const cy = y * K;
  const w = t.length === 2 ? (t[0] === "A" ? 28.5 : 32.5) : t === "A1(M)" ? 54 : t.length === 5 ? 55.5 : t.length === 4 ? 46.5 : t[0] === "M" ? 41 : 37.5;
  const motor = t[0] === "M" || t === "A1(M)";
  return svg`<g>
    <rect class="shield ${motor ? "shield-m" : "shield-a"}" x=${cx - w / 2} y=${cy - 11.5} width=${w} height="23" rx="2.5" />
    <text class="shield-text ${motor ? "on-m" : "on-a"}" x=${cx} y=${cy + 5.7}>${t}</text>
  </g>`;
};

@customElement("spot-map")
class SpotMap extends LitElement {
  static styles = css`
    :host { display: block; position: relative; height: 720px; overflow: hidden; background: #c3e1ca; font-family: Roboto, "Liberation Sans", sans-serif; letter-spacing: 0; }
    .canvas { display: block; width: 1714px; height: 720px; }
    .land { fill: #c3e1ca; }
    .park { fill: #a2d1aa; }
    .mid { fill: #b2dab8; }
    .urban { fill: #e7e9ed; }
    .water { fill: #a4bff5; }
    .river { fill: none; stroke: #a4bff5; stroke-width: 8px; stroke-linejoin: round; }
    .lane { fill: none; stroke: #fff; stroke-width: 1.7px; stroke-linejoin: round; stroke-linecap: round; }
    .street { fill: none; stroke: #fff; stroke-width: 1.6px; }
    .road-edge, .road, .trunk-edge, .trunk, .mway-edge, .mway { fill: none; stroke-linejoin: round; }
    .road-edge { stroke: #ecc067; stroke-width: 4.2px; }
    .road { stroke: #fdefc9; stroke-width: 2.1px; }
    .trunk-edge { stroke: #edb550; stroke-width: 5.8px; }
    .trunk { stroke: #fdedc0; stroke-width: 3.2px; }
    .mway-edge { stroke: #efb448; stroke-width: 7px; stroke-linecap: round; }
    .mway { stroke: #feedc0; stroke-width: 4.3px; stroke-linecap: round; }
    .label { font-size: 21.3px; text-anchor: middle; fill: #24282d; stroke: #fff; stroke-opacity: 0.8; stroke-width: 4px; paint-order: stroke; stroke-linejoin: round; }
    .city { font-size: 23px; font-weight: 500; fill: #1b1d20; }
    .capital { font-size: 35px; font-weight: 500; fill: #1b1d20; stroke-width: 4px; }
    .isle { font-style: italic; }
    .nature { font-size: 25px; fill: #3f8549; }
    .slant { font-style: italic; }
    .shield { stroke-width: 1px; }
    .shield-a { fill: #789f50; stroke: #6c9346; }
    .shield-m { fill: #7070c4; stroke: #6464b8; }
    .shield-text { font-size: 16px; font-weight: 700; text-anchor: middle; }
    .on-a { fill: #fbdc3e; }
    .on-m { fill: #fff; }
    .pin { fill: #d85140; stroke: #ad2c24; stroke-width: 1.2px; }
    .pin-dot { fill: #a32920; }
    .google { font-family: Inter, sans-serif; font-size: 32.5px; font-weight: 500; stroke: #fff; stroke-opacity: 0.75; stroke-width: 3px; paint-order: stroke; }
    .g-blue { fill: #4f86ec; }
    .g-red { fill: #dc4f3e; }
    .g-yellow { fill: #f2bd42; }
    .g-green { fill: #58a55c; }
    .card { position: absolute; background: #fff; border-radius: 3.6px; box-shadow: 0 2px 7px -1px rgba(0, 0, 0, 0.35); }
    .types { left: 18px; top: 18px; height: 72px; display: flex; align-items: center; font-size: 32.4px; line-height: 72px; }
    .type-map { width: 125px; text-align: center; font-weight: 500; color: #000; }
    .type-sat { width: 178px; text-align: center; color: #565656; box-shadow: -2px 0 3px -1px rgba(0, 0, 0, 0.2); }
    .square { right: 18px; width: 72px; height: 72px; display: flex; align-items: center; justify-content: center; }
    .full { top: 18px; }
    .peg { top: 401px; }
    .zoom { right: 18px; top: 531px; width: 72px; height: 146px; display: flex; flex-direction: column; align-items: center; }
    .zoom-cell { height: 72px; display: flex; align-items: center; }
    .zoom-line { width: 54px; height: 2px; background: #e6e6e6; }
    .glyph { display: block; fill: #666; }
    .legal { position: absolute; right: 0; bottom: 0; height: 25px; display: flex; gap: 1.5px; font-size: 18px; line-height: 27px; color: #000; white-space: nowrap; }
    .legal-item { padding: 0 10px; background: rgba(245, 245, 245, 0.7); }
  `;

  render() {
    return html`
      <svg class="canvas" viewBox="295 404 1714 720">
        ${layer("park", "park")} ${layer("mid", "mid")} ${layer("light", "land")} ${layer("urban", "urban")}
        <path class="urban" d=${GREY_BITS} />
        <path class="mid" d=${GREEN_BITS} />
        ${layer("water", "water")}
        <path class="street" d=${STREETS} />
        ${layer("river", "river")} ${layer("lane", "lane")} ${layer("road", "road-edge")} ${layer("road", "road")}
        ${layer("trunk", "trunk-edge")} ${layer("motorway", "mway-edge")} ${layer("trunk", "trunk")} ${layer("motorway", "mway")}
        ${LABELS.map(([t, x, y, c]) => svg`<text class="label ${c ?? ""}" x=${x * K} y=${y * K + (c === "capital" ? 12 : c ? 8 : 7.2)}>${t}</text>`)}
        ${SHIELDS.map(shield)}
        ${PINS.map(
          ([x, y]) => svg`<g transform="translate(${x} ${y})">
            <path class="pin" d="M0 0C-1.600-1.500-1.800-5-3-9C-5-15-9-20-14.500-26.500C-19.500-32-22.600-37-22.600-43.500A22.600 22.600 0 0 1 22.600-43.500C22.600-37 19.500-32 14.500-26.500C9-20 5-15 3-9C1.800-5 1.600-1.500 0 0Z" />
            <circle class="pin-dot" cx="0" cy="-43" r="8.9" />
          </g>`
        )}
        <text class="google" x="313" y="1108" textLength="100"><tspan class="g-blue">G</tspan><tspan class="g-red">o</tspan><tspan class="g-yellow">o</tspan><tspan class="g-blue">g</tspan><tspan class="g-green">l</tspan><tspan class="g-red">e</tspan></text>
      </svg>
      <div class="card types">
        <div class="type-map">Map</div>
        <div class="type-sat">Satellite</div>
      </div>
      <div class="card square full">
        <svg class="glyph" width="32.400" height="32.400" viewBox="0 0 18 18"><path d="M0 0v6h2V2h4V0H0zM16 0h-4v2h4v4h2V0h-2zM16 16h-4v2h6v-6h-2v4zM2 12H0v6h6v-2H2v-4z" /></svg>
      </div>
      <div class="card square peg">
        <svg width="31.500" height="55" viewBox="1327 191 84 165" preserveAspectRatio="none">
          <g fill="#f2bd4b" stroke="#7d7468" stroke-width="3">
            <path d="M1350 246H1389L1397 256L1408 302L1399 310L1392 296V352H1373V312H1366V352H1348V296L1340 310L1331 302L1342 256Z" />
            <path d="M1352 250H1386L1370 276Z" fill="#d0853f" stroke="none" />
            <ellipse cx="1370" cy="221" rx="24" ry="27" />
          </g>
        </svg>
      </div>
      <div class="card zoom">
        <div class="zoom-cell"><svg class="glyph" width="32.400" height="32.400" viewBox="0 0 18 18"><path d="M18 7h-7V0H7v7H0v4h7v7h4v-7h7z" /></svg></div>
        <div class="zoom-line"></div>
        <div class="zoom-cell"><svg class="glyph" width="32.400" height="32.400" viewBox="0 0 18 18"><path d="M0 7h18v4H0V7z" /></svg></div>
      </div>
      <div class="legal">
        <div class="legal-item">Keyboard shortcuts</div>
        <div class="legal-item">Map data ©2023 Google</div>
        <div class="legal-item">Terms of Use</div>
        <div class="legal-item">Report a map error</div>
      </div>
    `;
  }
}

@customElement("app-root")
class AppRoot extends LitElement {
  static styles = css`
    :host { display: block; height: 1708px; overflow: hidden; font-family: Inter, "Liberation Sans", sans-serif; font-size: 28px; line-height: 43px; letter-spacing: -0.25px; color: #212529; background: #f4f0eb; }
    * { box-sizing: border-box; }
    .page { display: flex; height: 1708px; border-top: 2px solid #656166; border-left: 2px solid #000; }
    .icon { display: block; flex: none; }
    .side { flex: none; position: relative; z-index: 1; width: 115px; padding: 25px 2px 0 0; border-left: 2px solid #454a60; background: #18213c; color: #fff; display: flex; flex-direction: column; align-items: center; box-shadow: 4px 0 22px rgba(0, 0, 0, 0.45); }
    .burger { width: 57.6px; height: 57.6px; }
    .logo { display: block; flex: none; width: 60.5px; height: 77px; margin-top: 91px; }
    .nav { margin-top: 240px; display: flex; flex-direction: column; gap: 62px; }
    .nav-icon { width: 43.2px; height: 43.2px; }
    .gold { fill: #c19c48; }
    .gold-line { fill: none; stroke: #c19c48; }
    .white { fill: #fff; }
    .white-line { fill: none; stroke: #fff; }
    .main { flex: 1; min-width: 0; display: flex; flex-direction: column; }
    .content { flex: 1; min-height: 0; overflow: hidden; padding: 65px 145px 0 178px; display: flex; flex-direction: column; }
    .content > * { flex: none; }
    .title { margin: 0; font-size: 70px; line-height: 86px; font-weight: 500; letter-spacing: 1.4px; text-align: center; color: #18213c; padding-right: 2px; }
    .summary { margin-top: 64px; height: 129px; border-radius: 10.8px; background: #18213c; color: #fff; display: flex; align-items: center; justify-content: center; }
    .map { margin-top: 58px; }
    .notes-head { margin-top: 101px; height: 67px; display: flex; align-items: center; justify-content: space-between; }
    .notes-title { margin: 0; font-size: 49px; line-height: 60px; font-weight: 500; letter-spacing: 0.8px; }
    .edit { width: 78px; height: 67px; border-radius: 9px; background: #c19c48; color: #fff; display: flex; align-items: center; justify-content: center; padding: 0 3px 4px 0; }
    .edit-icon { width: 28.8px; height: 28.8px; }
    .rule { margin-top: 35px; height: 2px; background: #c4c2be; }
    .note { margin: 49px 198px 0; height: 200px; padding: 17px; border: 2px solid #c9c9c7; border-radius: 7px; background: #f0efeb; color: #35373a; box-shadow: inset 0 3px 4px rgba(0, 0, 0, 0.07); }
    .footer { flex: none; position: relative; height: 264px; padding: 29px 25px 0 29px; background: #000; color: #fff; box-shadow: 0 -6px 28px rgba(20, 50, 20, 0.1); }
    .cols { display: grid; grid-template-columns: 660.5px 451px 451px 421px; height: 172px; }
    .col { display: flex; flex-direction: column; align-items: stretch; }
    .built { margin-top: 28.700px; }
    .people { margin-top: 14px; display: flex; align-items: center; letter-spacing: -0.4px; }
    .brand { width: 28.8px; height: 28.8px; color: #c19c48; margin-left: 8px; }
    .amp { margin: 0 15px 0 15px; }
    .head { font-weight: 700; letter-spacing: 0.15px; margin-bottom: 7px; }
    .tight { letter-spacing: -0.45px; }
    .select { margin-top: 7px; height: 67px; display: flex; border: 1px solid #d5d9e2; background: #eaebef; color: #212529; }
    .flag-cell { width: 81px; background: #f8f9fb; border-right: 1px solid #dcdfe6; display: flex; align-items: center; justify-content: center; }
    .country { flex: 1; padding-left: 22px; line-height: 66px; }
    .chev { align-self: center; margin-right: 26px; }
    .find { display: flex; align-items: center; justify-content: center; padding-left: 1px; letter-spacing: -0.15px; }
    .find-icon { width: 28.8px; height: 28.8px; margin-left: 16px; color: #e8e8e8; }
  `;

  render() {
    return html`
      <div class="page">
        <div class="side">
          ${icon("list", "burger")}
          <svg class="logo" viewBox="88 459 182 203" preserveAspectRatio="none">
            <path class="gold-line" stroke-width="6" d="M257 578A87 79 0 1 0 198 621" />
            <path class="gold-line" stroke-width="7" d="M92 543.500H130M92 553.500H130M138 543.500H178M138 553.500H178M152 480L137 495M172 479L158 496M137 592L152 606M160 592L171 608M107 532H130" />
            <path class="gold-line" stroke-width="8" d="M153 505Q146 516 145 532M145 566Q147 576 153 582" />
            <path class="gold" d="M117 503H132L129 522H110ZM165 504H176V522H165ZM166 529H176V535H166ZM110 566H130L134 583H119ZM172 566H177V583H172Z" />
            <path class="white-line" stroke-width="7" d="M186 543.500H222M186 553.500H222M228 543.500H262M228 553.500H262M188 480L205 495M228 520H250M228 531.500H253M228 569H251M190 504V522M190 566V582M213 566L208 582" />
            <path class="white-line" stroke-width="8" d="M208 504Q215 516 215 532" />
            <path class="white" d="M186 592H200L194 611L186 613Z" />
            <path class="gold" fill-rule="evenodd" d="M237 661L214 626Q206 615 206 606A31 28 0 0 1 268 606Q268 615 260 626ZM222 608A15 13.500 0 1 0 252 608A15 13.500 0 1 0 222 608Z" />
            <ellipse class="gold" cx="237" cy="608" rx="7" ry="6.500" />
          </svg>
          <div class="nav">
            ${["home", "journals", "map", "report", "gear", "logout"].map((n) => icon(n, "nav-icon"))}
          </div>
        </div>
        <div class="main">
          <div class="content">
            <h1 class="title">Shawarma stand</h1>
            <div class="summary">Succulent shawarma for match-going fans to feast on, to be located near a football stadium in London.</div>
            <spot-map class="map"></spot-map>
            <div class="notes-head">
              <h3 class="notes-title">Notes</h3>
              <div class="edit">${icon("pencil", "edit-icon")}</div>
            </div>
            <div class="rule"></div>
            <div class="note">It will have a simple menu with three options of chicken, beef, or falafel, and customers can</div>
          </div>
          <div class="footer">
            <div class="cols">
              <div class="col">
                <div>© RightSpot 2023</div>
                <div class="built">Built by:</div>
                <div class="people">
                  <span>Andy Ageenkov</span>${icon("github", "brand")}<span class="amp">&amp;</span><span>Emanuel Dinssa</span>${icon("linkedin", "brand")}
                </div>
              </div>
              <div class="col">
                <div class="head">Quick Links</div>
                <div>FAQs</div>
                <div>Contact</div>
              </div>
              <div class="col">
                <div class="head">Legal</div>
                <div class="tight">Privacy Policy</div>
                <div class="tight">Terms of Service</div>
              </div>
              <div class="col">
                <div class="head">Region</div>
                <div class="select">
                  <div class="flag-cell">
                    <svg width="39" height="29" viewBox="0 0 40 30">
                      <rect width="40" height="30" fill="#0f2369" />
                      <path d="M0 0L40 30M40 0L0 30" stroke="#fff" stroke-width="6.500" />
                      <path d="M0 0L17 13M40 30L23 17M40 0L22 13.500M0 30L18 16.500" stroke="#c03040" stroke-width="2.200" />
                      <path d="M20 0V30M0 15H40" stroke="#fff" stroke-width="10" />
                      <path d="M20 0V30M0 15H40" stroke="#c0303f" stroke-width="6" />
                    </svg>
                  </div>
                  <div class="country">United Kingdom</div>
                  <svg class="chev" width="20" height="12" viewBox="0 0 20 12" fill="none" stroke="#343a40" stroke-width="2.400" stroke-linecap="round" stroke-linejoin="round"><path d="M1.500 1.500L10 10L18.500 1.500" /></svg>
                </div>
              </div>
            </div>
            <div class="find"><span>Find this project on Github</span>${icon("github", "find-icon")}</div>
          </div>
        </div>
      </div>
    `;
  }
}
